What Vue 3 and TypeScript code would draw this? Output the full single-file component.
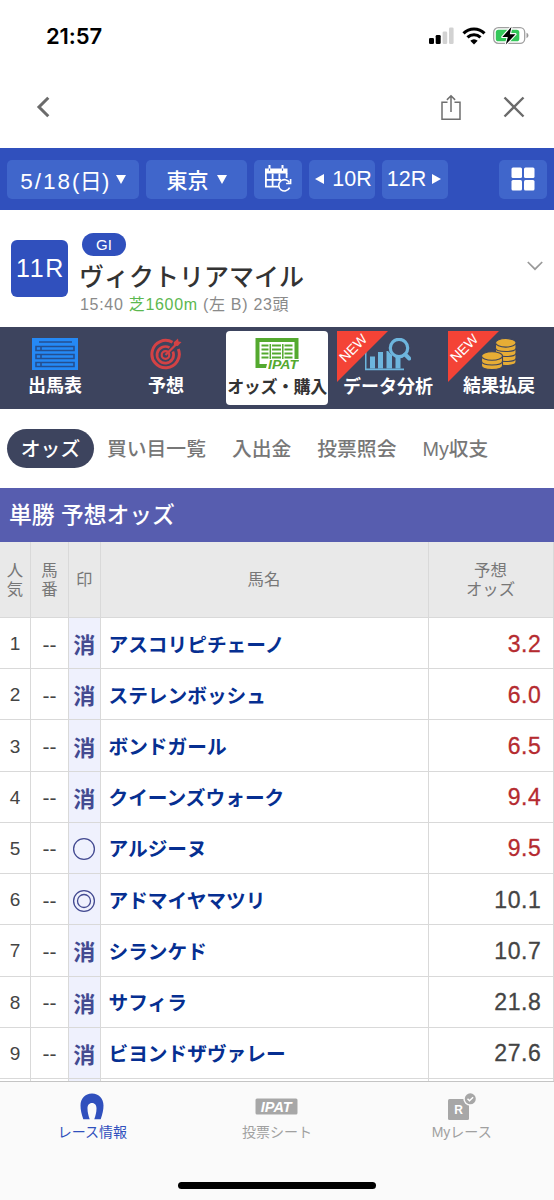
<script setup lang="ts">
import { ref } from 'vue'

interface Horse {
  rank: number
  mark: '消' | '○' | '◎'
  name: string
  odds: string
}

const mainTabs = [
  { key: 'entries', label: '出馬表', isNew: false },
  { key: 'forecast', label: '予想', isNew: false },
  { key: 'odds', label: 'オッズ・購入', isNew: false },
  { key: 'analysis', label: 'データ分析', isNew: true },
  { key: 'result', label: '結果払戻', isNew: true },
]
const activeMain = ref('odds')

const subTabs = ['オッズ', '買い目一覧', '入出金', '投票照会', 'My収支']
const activeSub = ref('オッズ')

const horses: Horse[] = [
  { rank: 1, mark: '消', name: 'アスコリピチェーノ', odds: '3.2' },
  { rank: 2, mark: '消', name: 'ステレンボッシュ', odds: '6.0' },
  { rank: 3, mark: '消', name: 'ボンドガール', odds: '6.5' },
  { rank: 4, mark: '消', name: 'クイーンズウォーク', odds: '9.4' },
  { rank: 5, mark: '○', name: 'アルジーヌ', odds: '9.5' },
  { rank: 6, mark: '◎', name: 'アドマイヤマツリ', odds: '10.1' },
  { rank: 7, mark: '消', name: 'シランケド', odds: '10.7' },
  { rank: 8, mark: '消', name: 'サフィラ', odds: '21.8' },
  { rank: 9, mark: '消', name: 'ビヨンドザヴァレー', odds: '27.6' },
]

const isHot = (odds: string) => Number(odds) < 10
</script>

<template>
  <div class="screen">
    <header class="status">
      <span class="status__time">21:57</span>
      <div class="status__icons">
        <svg width="26" height="18" viewBox="0 0 26 18">
          <rect x="0" y="11" width="5" height="6" rx="1.3" />
          <rect x="6.7" y="8" width="5" height="9" rx="1.3" />
          <rect x="13.6" y="4.5" width="4.6" height="12.5" rx="1.3" fill="#d2d2d2" />
          <rect x="20" y="0.5" width="4.6" height="16.5" rx="1.3" fill="#d2d2d2" />
        </svg>
        <svg class="status__wifi" width="24" height="18" viewBox="0 0 24 18">
          <g fill="none" stroke="#000" stroke-width="3.1">
            <path d="M1.5 6.3a15 15 0 0 1 21 0" />
            <path d="M5.5 10.4a9.3 9.3 0 0 1 13 0" />
          </g>
          <path d="M12 17.5 8.3 13.7a5.3 5.3 0 0 1 7.4 0z" />
        </svg>
        <svg width="36" height="20" viewBox="0 0 36 20">
          <rect x="0.7" y="1.7" width="31" height="15.6" rx="4.6" fill="#fff" stroke="#a0a0a0" stroke-width="1.3" />
          <rect x="2.8" y="3.7" width="23.5" height="11.6" rx="2.6" fill="#34c759" />
          <path d="M33.5 6.8v5.4q2-.8 2-2.7t-2-2.7z" fill="#999" />
          <path d="M18.5.8 9.3 11h5.5l-2 7.6L22.5 8.2h-5.7z" stroke="#fff" stroke-width="2.2" paint-order="stroke" stroke-linejoin="round" />
        </svg>
      </div>
    </header>

    <nav class="browser">
      <svg width="14" height="22" viewBox="0 0 14 22" fill="none" stroke="#6b6b6b" stroke-width="3">
        <path d="M12.3 1.8 3 11l9.3 9.2" />
      </svg>
      <div class="browser__actions">
        <svg width="20" height="27" viewBox="0 0 20 27" fill="none" stroke="#6f6f6f" stroke-width="1.5">
          <path d="M6.5 8.3H1v16.9h18V8.3h-5.5M10 18V2M5.9 5.9 10 1.8l4.1 4.1" />
        </svg>
        <svg width="22" height="22" viewBox="0 0 22 22" fill="none" stroke="#6b6b6b" stroke-width="2.4">
          <path d="m1.5 1.5 19 19M20.5 1.5l-19 19" />
        </svg>
      </div>
    </nav>

    <div class="toolbar">
      <button class="tool tool--date"><span>5/18<span class="tool__day">(日)</span></span><i class="tri tri--down" /></button>
      <button class="tool tool--place">東京<i class="tri tri--down" /></button>
      <button class="tool tool--calendar">
        <svg width="28" height="28" viewBox="0 0 28 28" fill="none" stroke="#fff">
          <path d="M1 3.500h22.500v5H1z" fill="#fff" stroke="none" />
          <path d="M5.500 4V0M18.500 4V0" stroke-width="2" />
          <path d="M5.500 3.500v2.300M18.500 3.500v2.300" stroke="#4066cb" stroke-width="1.200" />
          <path d="M1.900 8v13.700h12.600M22.600 8v5M2 14.800h15M8.600 8.500v13M15.400 8.500v7.500" stroke-width="1.800" />
          <path d="M25.400 17.500a5.700 5.700 0 1 0 .2 5.200" stroke-width="1.600" />
          <path d="M26.600 14v4.500h-4.500" stroke-width="1.600" />
        </svg>
      </button>
      <button class="tool tool--prev"><i class="tri tri--left" />10R</button>
      <button class="tool tool--next">12R<i class="tri tri--right" /></button>
      <button class="tool tool--menu">
        <svg width="24" height="24" viewBox="0 0 24 24" fill="#fff">
          <rect x="0.5" y="0.5" width="10.5" height="10.5" rx="1.5" />
          <rect x="13" y="0.5" width="10.5" height="10.5" rx="1.5" />
          <rect x="0.5" y="13" width="10.5" height="10.5" rx="1.5" />
          <rect x="13" y="13" width="10.5" height="10.5" rx="1.5" />
        </svg>
      </button>
    </div>

    <section class="race">
      <div class="race__number">11R</div>
      <div class="race__body">
        <span class="race__grade">GI</span>
        <h1 class="race__name">ヴィクトリアマイル</h1>
        <p class="race__info">15:40 <em>芝1600m</em> (左 B) 23頭</p>
      </div>
      <svg class="race__more" width="16" height="10" viewBox="0 0 16 10" fill="none" stroke="#999" stroke-width="1.7">
        <path d="m.8 1 7.200 7.200L15.200 1" />
      </svg>
    </section>

    <nav class="main-tabs">
      <a
        v-for="tab in mainTabs"
        :key="tab.key"
        class="main-tab"
        :class="[`main-tab--${tab.key}`, { 'main-tab--active': tab.key === activeMain }]"
        @click="activeMain = tab.key"
      >
        <svg v-if="tab.key === 'entries'" width="46" height="32" viewBox="0 0 46 32">
          <path d="M0 0h46v32H0z" fill="#2589f5" />
          <g fill="none" stroke="#244f91" stroke-width="1.6">
            <path d="M7 4h33" />
            <path d="M4 8.500h38v4H4zM4 16.500h38v4H4zM4 24.500h38v4H4zM9 8.500v4M9 16.500v4M9 24.500v4" />
          </g>
        </svg>
        <svg v-else-if="tab.key === 'forecast'" width="32" height="32" viewBox="0 0 32 32" fill="none" stroke="#d34245">
          <path d="M22.500 4.300A13.700 13.700 0 1 0 28.300 11" stroke-width="3" />
          <path d="M19.500 9.700A8.300 8.300 0 1 0 22.900 13.500" stroke-width="2.7" />
          <circle cx="15.5" cy="17" r="3.8" stroke-width="2.2" />
          <path d="M15.500 17 27 5.500" stroke-width="2.3" />
          <path d="m24 7.700-.2-3.500L28 .5l.5 3 3 .6-3.700 4z" fill="#d34245" stroke="none" />
        </svg>
        <svg v-else-if="tab.key === 'odds'" width="44" height="33" viewBox="0 0 44 33">
          <path d="M.5 0h43v23.500h-4V4h-35v22H12l-1 4H.5z" fill="#54a92f" />
          <g fill="none" stroke="#54a92f">
            <path d="M6.500 7.500h7M17 7.500h9M29.500 7.500h8M6.500 11.500h7M17 11.500h9M29.500 11.500h8M6.500 15.500h7M17 15.500h9M29.500 15.500h8M6.500 19.500h7M17 19.500h9M29.500 19.500h8" stroke-width="1.8" />
            <path d="M15.300 6v15M27.800 6v15" stroke-width="1.5" />
          </g>
          <text x="13" y="31" textLength="30" lengthAdjust="spacingAndGlyphs" class="ipat-mark">IPAT</text>
        </svg>
        <svg v-else-if="tab.key === 'analysis'" class="main-tab__chart" width="46" height="33" viewBox="0 0 46 33">
          <g fill="#6db5dd">
            <path d="M0 9h1.500v21.500H39v1.800H0z" />
            <path d="M5 18.500h5v12H5zM13 14h5v16.500h-5zM21.500 13h1.500q2.500 3 4 4v13.500h-5.500zM30.500 19.500h5v11h-5z" />
          </g>
          <circle cx="34" cy="10" r="8.7" fill="#3d445e" stroke="#6db5dd" stroke-width="3.2" />
          <path d="m40.200 16.500 4 4" stroke="#6db5dd" stroke-width="4" stroke-linecap="round" />
        </svg>
        <svg v-else width="36" height="32" viewBox="0 0 36 32">
          <g fill="#e7ad35" stroke="#3d445e" stroke-width="1.1">
            <path d="M14.500 20v4q0 3.500 10.300 3.500T35 24v-4z" />
            <path d="M14.500 15v5q0 3.500 10.300 3.500T35 20v-5z" />
            <path d="M14.500 10v5q0 3.500 10.300 3.500T35 15v-5z" />
            <path d="M14.500 5v5q0 3.500 10.300 3.500T35 10V5z" />
            <ellipse cx="24.8" cy="4.8" rx="10.3" ry="4.3" />
            <path d="M.5 23v4.500q0 4 10.500 4t10.500-4V23z" />
            <path d="M.5 18v5q0 4 10.500 4t10.500-4v-5z" />
            <ellipse cx="11" cy="18" rx="10.5" ry="4.2" />
          </g>
        </svg>
        <span class="main-tab__label">{{ tab.label }}</span>
        <span v-if="tab.isNew" class="ribbon"><b>NEW</b></span>
      </a>
    </nav>

    <nav class="sub-tabs">
      <a
        v-for="tab in subTabs"
        :key="tab"
        class="sub-tab"
        :class="{ 'sub-tab--active': tab === activeSub }"
        @click="activeSub = tab"
      >{{ tab }}</a>
    </nav>

    <main class="odds">
      <h2 class="odds__title">単勝 予想オッズ</h2>
      <div class="odds__row odds__row--head">
        <span>人<br>気</span>
        <span>馬<br>番</span>
        <span>印</span>
        <span>馬名</span>
        <span>予想<br>オッズ</span>
      </div>
      <div v-for="horse in horses" :key="horse.rank" class="odds__row">
        <span class="odds__rank">{{ horse.rank }}</span>
        <span class="odds__gate">--</span>
        <span class="odds__mark">
          <template v-if="horse.mark === '消'">消</template>
          <svg v-else width="24" height="24" viewBox="0 0 24 24" fill="none" stroke="#434a91" stroke-width="1.3">
            <circle cx="12" cy="12" r="10.4" />
            <circle v-if="horse.mark === '◎'" cx="12" cy="12" r="6.5" />
          </svg>
        </span>
        <span class="odds__name">{{ horse.name }}</span>
        <span class="odds__value" :class="{ 'odds__value--hot': isHot(horse.odds) }">{{ horse.odds }}</span>
      </div>
      <div class="odds__row">
        <span /><span /><span class="odds__mark" /><span /><span />
      </div>
    </main>

    <footer class="dock">
      <div class="dock__items">
        <a class="dock__item dock__item--active">
          <svg width="24" height="27" viewBox="0 0 24 27">
            <path d="M3.300 26.300C1.500 21 .5 17 .5 12.500.5 5.500 5 .5 12 .5S23.500 5.500 23.500 12.500c0 4.500-1 8.500-2.800 13.800h-6.400c1.300-4 2.200-7 2.200-10.800 0-3.200-1.500-5.500-4.500-5.500s-4.500 2.300-4.500 5.500c0 3.800.9 6.800 2.200 10.800z" fill="#3050bd" />
          </svg>
          <span>レース情報</span>
        </a>
        <a class="dock__item">
          <svg width="43" height="27" viewBox="0 0 43 27">
            <rect x="0.5" y="5.5" width="42" height="16" rx="1.5" fill="#a7a7a7" />
            <text x="21.3" y="18.7" text-anchor="middle" class="dock__ipat">IPAT</text>
          </svg>
          <span>投票シート</span>
        </a>
        <a class="dock__item">
          <svg width="36" height="27" viewBox="0 0 36 27">
            <rect x="4" y="6" width="21" height="21" rx="1.5" fill="#a7a7a7" />
            <circle cx="26.3" cy="5.8" r="7" fill="#fafafa" />
            <circle cx="26.3" cy="5.8" r="5.5" fill="#a7a7a7" />
            <path d="m23.500 5.800 2 2 3.600-3.600" fill="none" stroke="#fff" stroke-width="1.5" />
            <text x="14.5" y="20.8" text-anchor="middle" class="dock__r">R</text>
          </svg>
          <span>Myレース</span>
        </a>
      </div>
      <div class="dock__home" />
    </footer>
  </div>
</template>

<style>
body {
  margin: 0;
  background: #fff;
}
</style>

<style scoped>
.screen {
  display: flex;
  flex-direction: column;
  width: 554px;
  height: 1200px;
  overflow: hidden;
  font-family: "Liberation Sans", "Noto Sans CJK JP", sans-serif;
  color: #444;
}

.screen svg {
  display: block;
  flex-shrink: 0;
}

.status {
  display: flex;
  justify-content: space-between;
  align-items: center;
  box-sizing: border-box;
  height: 66px;
  padding: 6px 25px 0 46px;
}

.status__time {
  font-family: Inter, sans-serif;
  font-size: 22px;
  font-weight: 600;
  letter-spacing: -0.1px;
  color: #000;
}

.status__icons {
  display: flex;
  align-items: center;
}

.status__wifi {
  margin: 0 7px;
}

.browser {
  display: flex;
  justify-content: space-between;
  align-items: center;
  height: 82px;
  padding: 0 29px 0 36px;
}

.browser__actions {
  display: flex;
  align-items: center;
  gap: 42px;
}

.toolbar {
  display: flex;
  align-items: center;
  box-sizing: border-box;
  height: 62px;
  padding: 0 7px;
  background: #3050bd;
}

.tool {
  display: flex;
  align-items: center;
  justify-content: center;
  box-sizing: border-box;
  height: 39px;
  padding: 0;
  border: 0;
  border-radius: 5px;
  background: #4066cb;
  font: inherit;
  font-size: 21.5px;
  white-space: nowrap;
  color: #fff;
}

.tool--date {
  width: 132px;
  gap: 6px;
  font-size: 22.5px;
  letter-spacing: 2px;
}

.tool__day {
  font-size: 22px;
  letter-spacing: 0.3px;
}

.tool--place {
  width: 101px;
  margin-left: 7px;
  gap: 8px;
  font-size: 21px;
  font-weight: 500;
}

.tool--calendar {
  width: 48px;
  margin-left: 7px;
}

.tool--prev {
  width: 66px;
  margin-left: 7px;
  padding-left: 3px;
  gap: 8px;
}

.tool--next {
  width: 66px;
  margin-left: 7px;
  padding-right: 2px;
  gap: 6px;
}

.tool--menu {
  width: 48px;
  margin-left: auto;
}

.tri {
  width: 0;
  height: 0;
}

.tri--down {
  border: 5.5px solid transparent;
  border-top: 9px solid #fff;
  border-bottom: 0;
}

.tri--left {
  border: 5.5px solid transparent;
  border-right: 9px solid #fff;
  border-left: 0;
}

.tri--right {
  border: 5.5px solid transparent;
  border-left: 9px solid #fff;
  border-right: 0;
}

.race {
  display: flex;
  box-sizing: border-box;
  height: 117px;
  padding: 0 11px;
}

.race__number {
  box-sizing: border-box;
  width: 57px;
  height: 57px;
  margin-top: 30px;
  padding-left: 2px;
  border-radius: 6px;
  background: #3050bd;
  font-size: 25px;
  line-height: 57px;
  text-align: center;
  letter-spacing: 1.7px;
  white-space: nowrap;
  color: #fff;
}

.race__body {
  display: flex;
  flex-direction: column;
  align-items: flex-start;
  margin-left: 12px;
}

.race__grade {
  width: 44px;
  height: 23px;
  margin: 23px 0 0 2px;
  border-radius: 12px;
  background: #3050bd;
  font-size: 15px;
  line-height: 23px;
  text-align: center;
  color: #fff;
}

.race__name {
  margin: 5px 0 0 -1px;
  font-size: 25px;
  font-weight: 500;
  line-height: 32px;
  white-space: nowrap;
  color: #333;
}

.race__info {
  margin: 2px 0 0;
  font-size: 16px;
  line-height: 20px;
  letter-spacing: 0.7px;
  white-space: nowrap;
  color: #8a8a8a;
}

.race__info em {
  font-style: normal;
  color: #5cb84f;
}

.race__more {
  margin: 51px 0 0 auto;
}

.main-tabs {
  display: grid;
  grid-template-columns: repeat(5, 102px);
  justify-content: space-between;
  box-sizing: border-box;
  height: 82px;
  padding: 4px;
  background: #3d445e;
}

.main-tab {
  position: relative;
  display: flex;
  flex-direction: column;
  align-items: center;
  box-sizing: border-box;
  height: 74px;
  padding-top: 7px;
  border-radius: 4px;
  color: #fff;
}

.main-tab--active {
  background: #fff;
  color: #333;
}

.main-tab__label {
  margin-top: 4px;
  font-size: 18px;
  font-weight: 700;
  line-height: 25px;
  white-space: nowrap;
}

.main-tab--odds .main-tab__label {
  font-size: 17px;
  letter-spacing: -0.4px;
}

.ribbon {
  position: absolute;
  top: 0;
  left: 0;
  width: 51px;
  height: 51px;
  background: #f44336;
  clip-path: polygon(0 0, 100% 0, 0 100%);
}

.ribbon b {
  display: block;
  width: 34px;
  margin: 9px 0 0 -1px;
  font-size: 14px;
  font-weight: 400;
  line-height: 16px;
  text-align: center;
  transform: rotate(-45deg);
}

.ipat-mark {
  font-size: 12.5px;
  font-style: italic;
  font-weight: 700;
  fill: #54a92f;
  stroke: #fff;
  stroke-width: 2px;
  paint-order: stroke;
}

.sub-tabs {
  display: flex;
  align-items: center;
  box-sizing: border-box;
  height: 79px;
  padding-left: 7px;
  gap: 26px;
}

.sub-tab {
  padding-top: 1px;
  font-size: 19.8px;
  font-weight: 500;
  line-height: 38px;
  white-space: nowrap;
  color: #777;
}

.sub-tab--active {
  width: 87px;
  margin-right: -13px;
  border-radius: 20px;
  background: #3d445e;
  text-align: center;
  color: #fff;
}

.odds {
  flex: 1;
  min-height: 0;
  overflow: hidden;
}

.odds__title {
  height: 54px;
  margin: 0;
  padding-left: 9px;
  background: #575daf;
  font-size: 22.8px;
  font-weight: 500;
  line-height: 54px;
  color: #fff;
}

.odds__row {
  display: grid;
  grid-template-columns: 31px 38px 31.5px 328px 125px;
  height: 51.23px;
}

.odds__row > span {
  display: flex;
  align-items: center;
  justify-content: center;
  box-sizing: border-box;
  border-right: 1.5px solid #d9d9d9;
  border-bottom: 1.5px solid #d9d9d9;
  text-align: center;
}

.odds__row--head {
  height: 76px;
  background: #e9e9e9;
  font-size: 16.4px;
  line-height: 19px;
  color: #777;
}

.odds__row > .odds__rank {
  padding-top: 2px;
  font-size: 19px;
}

.odds__row > .odds__gate {
  padding-top: 3px;
  font-size: 21px;
}

.odds__row > .odds__mark {
  background: #eff1fd;
  font-size: 22px;
  font-weight: 700;
  color: #434a91;
}

.odds__row > .odds__mark svg {
  margin-top: 3px;
}

.odds__row > .odds__name {
  justify-content: flex-start;
  padding-left: 8px;
  font-size: 19.7px;
  font-weight: 700;
  color: #062f91;
}

.odds__row > .odds__value {
  justify-content: flex-end;
  padding: 2px 11px 0 0;
  font-size: 23px;
  letter-spacing: 0.6px;
  -webkit-text-stroke: 0.3px;
}

.odds__row > .odds__value--hot {
  color: #b52b30;
}

.dock {
  display: flex;
  flex-direction: column;
  align-items: center;
  box-sizing: border-box;
  height: 119.5px;
  border-top: 1.5px solid #c4c4c4;
  background: #fafafa;
}

.dock__items {
  display: grid;
  grid-template-columns: repeat(3, 1fr);
  width: 100%;
}

.dock__item {
  display: flex;
  flex-direction: column;
  align-items: center;
  padding-top: 11px;
  font-size: 14px;
  line-height: 22px;
  color: #a0a0a0;
}

.dock__item--active {
  color: #3050bd;
}

.dock__item span {
  margin-top: 1px;
}

.dock__ipat {
  font-size: 14.5px;
  font-style: italic;
  font-weight: 700;
  fill: #fff;
}

.dock__r {
  font-size: 12px;
  font-weight: 700;
  fill: #fff;
}

.dock__home {
  width: 198px;
  height: 7px;
  margin-top: 39px;
  border-radius: 4px;
  background: #000;
}
</style>
